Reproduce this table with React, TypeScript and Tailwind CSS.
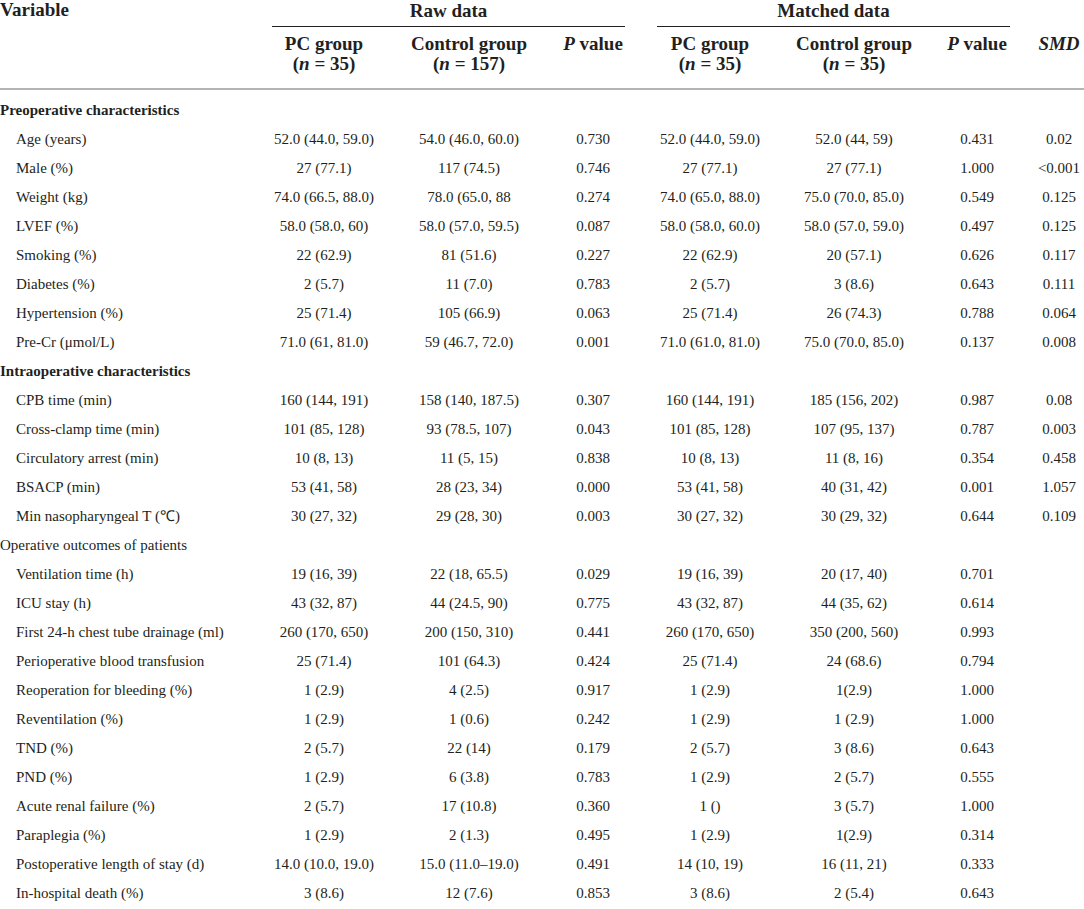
import React from "react";

type Row = {
    label: string
    section?: "bold" | "plain"
    values?: string[]
}

const rows: Row[] = [
    { label: "Preoperative characteristics", section: "bold" },
    { label: "Age (years)", values: ["52.0 (44.0, 59.0)", "54.0 (46.0, 60.0)", "0.730", "52.0 (44.0, 59.0)", "52.0 (44, 59)", "0.431", "0.02"] },
    { label: "Male (%)", values: ["27 (77.1)", "117 (74.5)", "0.746", "27 (77.1)", "27 (77.1)", "1.000", "<0.001"] },
    { label: "Weight (kg)", values: ["74.0 (66.5, 88.0)", "78.0 (65.0, 88", "0.274", "74.0 (65.0, 88.0)", "75.0 (70.0, 85.0)", "0.549", "0.125"] },
    { label: "LVEF (%)", values: ["58.0 (58.0, 60)", "58.0 (57.0, 59.5)", "0.087", "58.0 (58.0, 60.0)", "58.0 (57.0, 59.0)", "0.497", "0.125"] },
    { label: "Smoking (%)", values: ["22 (62.9)", "81 (51.6)", "0.227", "22 (62.9)", "20 (57.1)", "0.626", "0.117"] },
    { label: "Diabetes (%)", values: ["2 (5.7)", "11 (7.0)", "0.783", "2 (5.7)", "3 (8.6)", "0.643", "0.111"] },
    { label: "Hypertension (%)", values: ["25 (71.4)", "105 (66.9)", "0.063", "25 (71.4)", "26 (74.3)", "0.788", "0.064"] },
    { label: "Pre-Cr (μmol/L)", values: ["71.0 (61, 81.0)", "59 (46.7, 72.0)", "0.001", "71.0 (61.0, 81.0)", "75.0 (70.0, 85.0)", "0.137", "0.008"] },
    { label: "Intraoperative characteristics", section: "bold" },
    { label: "CPB time (min)", values: ["160 (144, 191)", "158 (140, 187.5)", "0.307", "160 (144, 191)", "185 (156, 202)", "0.987", "0.08"] },
    { label: "Cross-clamp time (min)", values: ["101 (85, 128)", "93 (78.5, 107)", "0.043", "101 (85, 128)", "107 (95, 137)", "0.787", "0.003"] },
    { label: "Circulatory arrest (min)", values: ["10 (8, 13)", "11 (5, 15)", "0.838", "10 (8, 13)", "11 (8, 16)", "0.354", "0.458"] },
    { label: "BSACP (min)", values: ["53 (41, 58)", "28 (23, 34)", "0.000", "53 (41, 58)", "40 (31, 42)", "0.001", "1.057"] },
    { label: "Min nasopharyngeal T (℃)", values: ["30 (27, 32)", "29 (28, 30)", "0.003", "30 (27, 32)", "30 (29, 32)", "0.644", "0.109"] },
    { label: "Operative outcomes of patients", section: "plain" },
    { label: "Ventilation time (h)", values: ["19 (16, 39)", "22 (18, 65.5)", "0.029", "19 (16, 39)", "20 (17, 40)", "0.701", ""] },
    { label: "ICU stay (h)", values: ["43 (32, 87)", "44 (24.5, 90)", "0.775", "43 (32, 87)", "44 (35, 62)", "0.614", ""] },
    { label: "First 24-h chest tube drainage (ml)", values: ["260 (170, 650)", "200 (150, 310)", "0.441", "260 (170, 650)", "350 (200, 560)", "0.993", ""] },
    { label: "Perioperative blood transfusion", values: ["25 (71.4)", "101 (64.3)", "0.424", "25 (71.4)", "24 (68.6)", "0.794", ""] },
    { label: "Reoperation for bleeding (%)", values: ["1 (2.9)", "4 (2.5)", "0.917", "1 (2.9)", "1(2.9)", "1.000", ""] },
    { label: "Reventilation (%)", values: ["1 (2.9)", "1 (0.6)", "0.242", "1 (2.9)", "1 (2.9)", "1.000", ""] },
    { label: "TND (%)", values: ["2 (5.7)", "22 (14)", "0.179", "2 (5.7)", "3 (8.6)", "0.643", ""] },
    { label: "PND (%)", values: ["1 (2.9)", "6 (3.8)", "0.783", "1 (2.9)", "2 (5.7)", "0.555", ""] },
    { label: "Acute renal failure (%)", values: ["2 (5.7)", "17 (10.8)", "0.360", "1 ()", "3 (5.7)", "1.000", ""] },
    { label: "Paraplegia (%)", values: ["1 (2.9)", "2 (1.3)", "0.495", "1 (2.9)", "1(2.9)", "0.314", ""] },
    { label: "Postoperative length of stay (d)", values: ["14.0 (10.0, 19.0)", "15.0 (11.0–19.0)", "0.491", "14 (10, 19)", "16 (11, 21)", "0.333", ""] },
    { label: "In-hospital death (%)", values: ["3 (8.6)", "12 (7.6)", "0.853", "3 (8.6)", "2 (5.4)", "0.643", ""] },
]

const grid = "grid grid-cols-[264px_120px_170px_78px_156px_132px_114px_50px]"

function GroupCell({ title, n }: { title: string; n: string }) {
    return (
        <div className="flex flex-col items-center whitespace-nowrap">
            <span className="leading-[20px]">{title}</span>
            <span className="leading-[20px]">
                (<i>n</i> = {n})
            </span>
        </div>
    )
}

function PValue() {
    return (
        <div className="flex justify-center whitespace-nowrap leading-[20px]">
            <span><i>P</i> value</span>
        </div>
    )
}

export default function App() {
    return (
        <div
            className="w-[1084px] h-[909px] overflow-hidden bg-white text-[#231f20]"
            style={{ fontFamily: '"Liberation Serif", "Times New Roman", serif' }}
        >
            {/* header */}
            <div className="border-b-2 border-[#b4b4b4] font-bold text-[19px]">
                <div className={grid + " h-[27px]"}>
                    <div className="leading-[18px] pt-[1px]">Variable</div>
                    <div className="col-span-3 ml-[8px] mr-[7px] border-b border-[#231f20] text-center leading-[22px]">Raw data</div>
                    <div className="col-span-3 ml-[25px] mr-[24px] border-b border-[#231f20] text-center leading-[22px]">Matched data</div>
                    <div />
                </div>
                <div className={grid + " pt-[7px] pb-[14px]"}>
                    <div />
                    <GroupCell title="PC group" n="35" />
                    <GroupCell title="Control group" n="157" />
                    <PValue />
                    <GroupCell title="PC group" n="35" />
                    <GroupCell title="Control group" n="35" />
                    <PValue />
                    <div className="flex justify-center leading-[20px]"><i>SMD</i></div>
                </div>
            </div>

            {/* body */}
            <div className="pt-[6px] text-[15px]">
                {rows.map((row) =>
                    row.section ? (
                        <div
                            key={row.label}
                            className={
                                row.section === "bold"
                                    ? "h-[29px] flex items-center font-bold"
                                    : "h-[29px] flex items-center"
                            }
                        >
                            {row.label}
                        </div>
                    ) : (
                        <div key={row.label} className={grid + " h-[29px] items-center"}>
                            <div className="pl-[16px] whitespace-nowrap">{row.label}</div>
                            {row.values!.map((v, i) => (
                                <div key={i} className="text-center whitespace-nowrap">{v}</div>
                            ))}
                        </div>
                    )
                )}
            </div>
        </div>
    );
}
